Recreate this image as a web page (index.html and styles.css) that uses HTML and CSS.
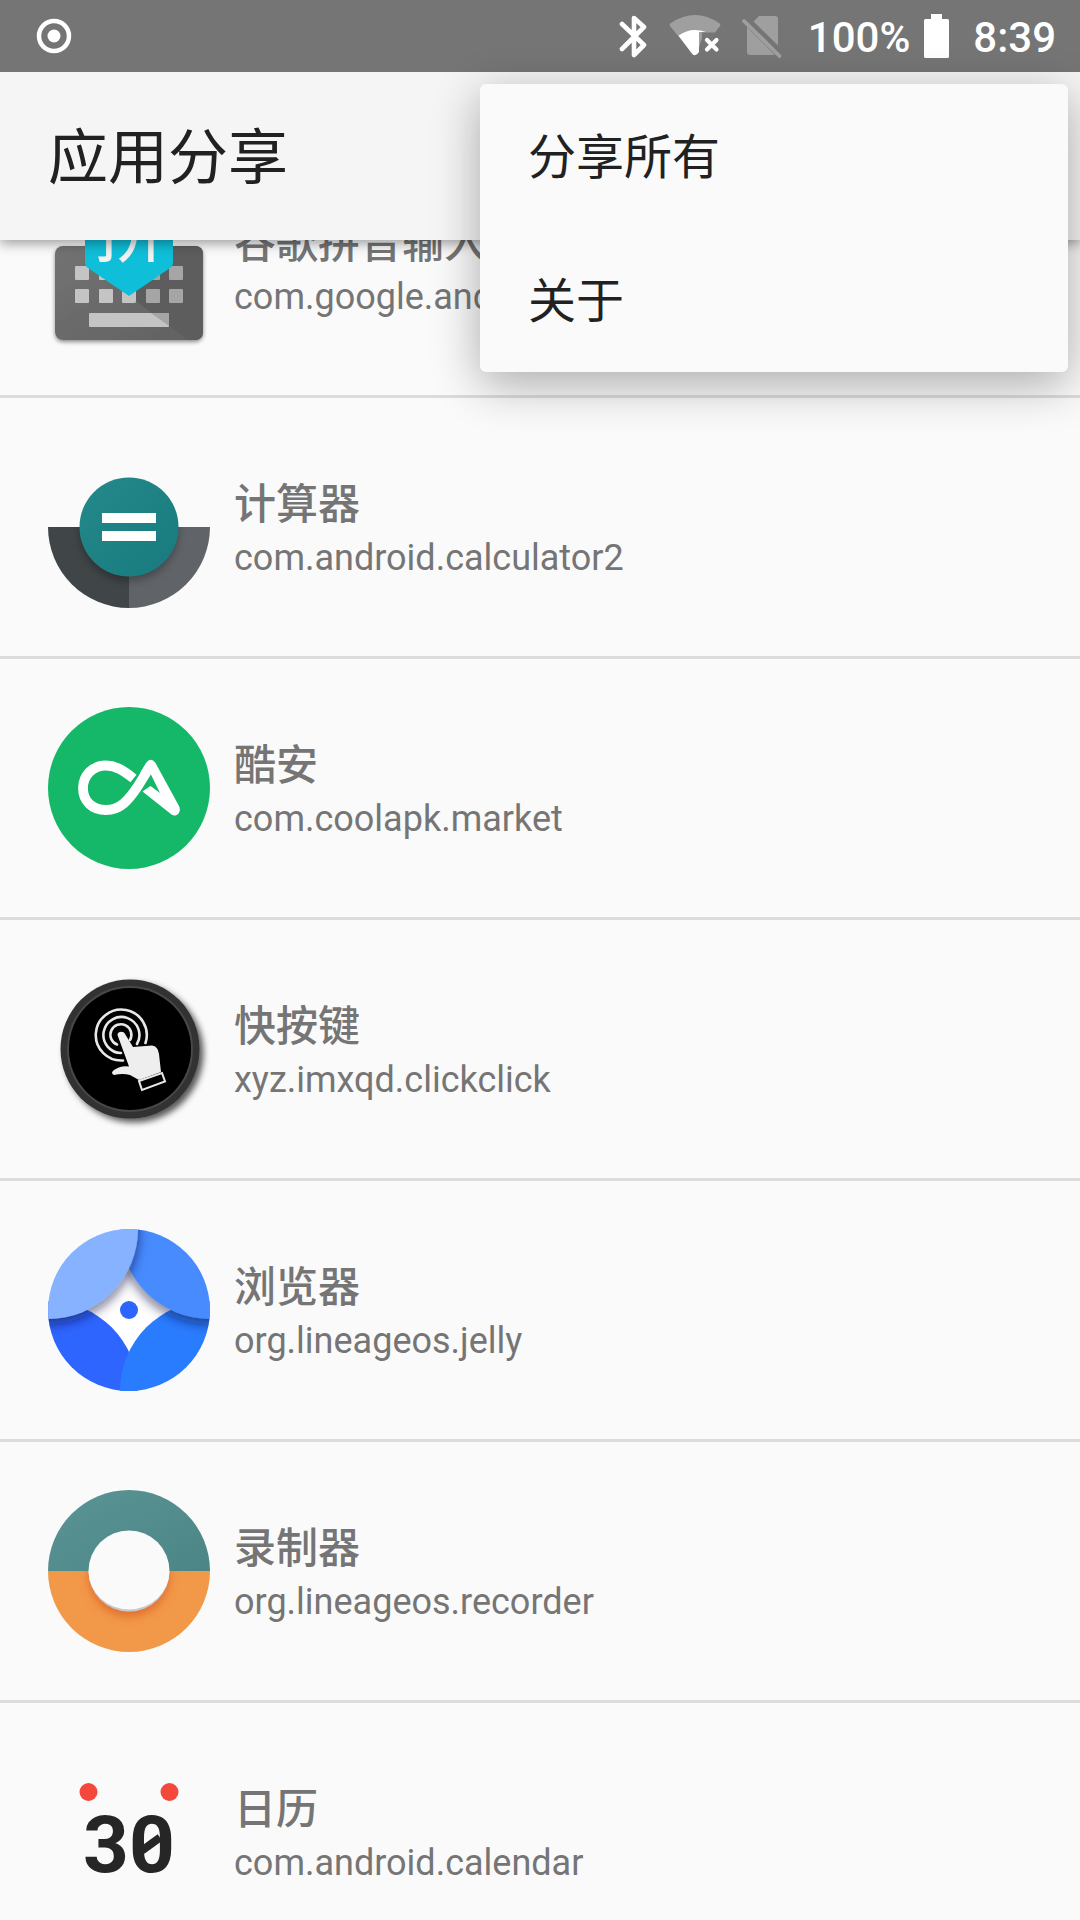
FILE: index.html
```html
<!DOCTYPE html>
<html lang="zh-CN">
<head>
<meta charset="utf-8">
<meta name="viewport" content="width=device-width, initial-scale=1">
<title>应用分享</title>
<link rel="stylesheet" href="styles.css">
</head>
<body>
<div class="screen">
  <div class="status-bar">
    <svg class="status-record" width="36" height="36" viewBox="0 0 36 36" aria-hidden="true">
      <circle cx="18" cy="18" r="15" fill="none" stroke="#fff" stroke-width="4.5"/>
      <circle cx="18" cy="18" r="6.5" fill="#fff"/>
    </svg>
    <div class="status-icons">
      <svg width="30" height="44" viewBox="0 0 30 44" aria-hidden="true">
        <path d="M4 10L26 31L16 41V4L26 13L4 35" fill="none" stroke="#fff" stroke-width="4.6" stroke-linecap="round" stroke-linejoin="round"/>
      </svg>
      <svg width="52" height="44" viewBox="0 0 52 44" aria-hidden="true">
        <path d="M1 12Q0 10 2 9Q26-7 50 9Q52 10 51 12L46 18.500H33V24L28 40Q26 42.500 23.500 40Z" fill="#9f9f9f"/>
        <path d="M9.500 21.500Q22 12.500 37 18H30V38Q26 44 22.500 39Z" fill="#fff"/>
        <path d="M38 26L47.500 35.500M47.500 26L38 35.500" stroke="#fff" stroke-width="4.200" stroke-linecap="round"/>
      </svg>
      <svg width="40" height="44" viewBox="0 0 40 44" aria-hidden="true">
        <path d="M11.500 7.500L17 2H33Q36 2 36 5V31.500ZM5 13L33 41H8Q5 41 5 38Z" fill="#9f9f9f"/>
        <path d="M2 7L37.500 42" stroke="#9f9f9f" stroke-width="3.800" stroke-linecap="round"/>
      </svg>
    </div>
    <span class="status-text">100%</span>
    <svg class="status-battery" width="25" height="44" viewBox="0 0 25 44" aria-hidden="true">
      <path d="M7 0H18V5H23.500Q25 5 25 6.500V42.500Q25 44 23.500 44H1.500Q0 44 0 42.500V6.500Q0 5 1.500 5H7Z" fill="#fff"/>
    </svg>
    <time class="status-text">8:39</time>
  </div>

  <header class="app-bar">
    <h1 class="app-title">应用分享</h1>
  </header>

  <main class="content">
    <ul class="app-list">
      <li class="app-row">
        <svg class="app-icon" viewBox="0 0 162 162" aria-hidden="true">
          <defs>
            <linearGradient id="kbBody" x1="0" y1="0" x2="1" y2="1"><stop offset="0" stop-color="#737373"/><stop offset="1" stop-color="#616161"/></linearGradient>
            <filter id="kbShadow" x="-10%" y="-10%" width="120%" height="130%"><feDropShadow dx="0" dy="2" stdDeviation="2" flood-opacity=".45"/></filter>
          </defs>
          <rect x="7" y="61" width="148" height="94" rx="8" fill="url(#kbBody)" filter="url(#kbShadow)"/>
          <path d="M81 111L125 78V61H147Q155 61 155 69V147Q155 155 147 155H140Z" fill="#5d5d5d"/>
          <g fill="#c4c4c4">
            <rect x="27" y="81" width="14" height="14" rx="1"/><rect x="51" y="81" width="14" height="14" rx="1"/>
            <rect x="27" y="104" width="14" height="14" rx="1"/><rect x="51" y="104" width="14" height="14" rx="1"/><rect x="74" y="104" width="14" height="14" rx="1"/>
            <rect x="41" y="128" width="80" height="14" rx="1"/>
          </g>
          <g fill="#a5a5a5">
            <rect x="98" y="81" width="14" height="14" rx="1"/><rect x="121" y="81" width="14" height="14" rx="1"/>
            <rect x="98" y="104" width="14" height="14" rx="1"/><rect x="121" y="104" width="14" height="14" rx="1"/>
            <path d="M88 116L88 118H86ZM103 128H121V141Z"/>
          </g>
          <path d="M37 8H125V77Q125 81 122 83L81 111L40 83Q37 81 37 77Z" fill="#0fbfd9"/>
          <text x="83" y="71" text-anchor="middle" class="pinyin-glyph">拼</text>
        </svg>
        <div class="app-text"><h2 class="app-name">谷歌拼音输入法</h2><p class="app-package">com.google.android.inputmethod.pinyin</p></div>
      </li>
      <li class="app-row">
        <svg class="app-icon" viewBox="0 0 162 162" aria-hidden="true">
          <defs>
            <linearGradient id="calcDisc" x1="0" y1="0" x2="1" y2="1"><stop offset="0" stop-color="#24898a"/><stop offset="1" stop-color="#187a7e"/></linearGradient>
            <filter id="calcShadow" x="-20%" y="-20%" width="140%" height="150%"><feDropShadow dx="0" dy="5" stdDeviation="4" flood-opacity=".3"/></filter>
            <clipPath id="calcBowl"><path d="M0 81H162A81 81 0 0 1 0 81Z"/></clipPath>
          </defs>
          <path d="M0 81A81 81 0 0 0 81 162V81Z" fill="#404548"/>
          <path d="M162 81A81 81 0 0 1 81 162V81Z" fill="#606469"/>
          <g clip-path="url(#calcBowl)"><circle cx="81" cy="81" r="49" fill="#187a7e" filter="url(#calcShadow)"/></g>
          <circle cx="81" cy="81" r="49.500" fill="url(#calcDisc)"/>
          <path d="M54 67H108V77H54ZM54 85H108V95H54Z" fill="#fff"/>
        </svg>
        <div class="app-text"><h2 class="app-name">计算器</h2><p class="app-package">com.android.calculator2</p></div>
      </li>
      <li class="app-row">
        <svg class="app-icon" viewBox="0 0 162 162" aria-hidden="true">
          <circle cx="81" cy="81" r="81" fill="#15b868"/>
          <path d="M85.500 71.500C76 64 68 58.500 58 58.500C44 58.500 35 69 35 81C35 94 44 103 58 103C72 103 80 94 90 79L102.700 58.500" fill="none" stroke="#fff" stroke-width="9.800" stroke-linejoin="round"/>
          <path d="M98 56Q102.700 49.500 107.500 56L131 99C134 105 128.500 111 123.500 107.500L94.500 84.500L102.500 79L112 86L102.700 67L97 75L92 66Z" fill="#fff"/>
        </svg>
        <div class="app-text"><h2 class="app-name">酷安</h2><p class="app-package">com.coolapk.market</p></div>
      </li>
      <li class="app-row">
        <svg class="app-icon" viewBox="0 0 162 162" aria-hidden="true">
          <defs><filter id="clickShadow" x="-20%" y="-20%" width="150%" height="150%"><feDropShadow dx="4" dy="4" stdDeviation="3" flood-opacity=".65"/></filter></defs>
          <circle cx="82" cy="81" r="69.500" fill="#303030" filter="url(#clickShadow)"/>
          <circle cx="82" cy="81" r="62" fill="none" stroke="#484848" stroke-width="2"/>
          <circle cx="82" cy="81" r="61" fill="#000"/>
          <g fill="none" stroke="#e8e8e8" stroke-width="2.600" stroke-linecap="round">
            <path d="M97.500 75A25.500 25.500 0 1 0 75 92.500"/>
            <path d="M89 76A18 18 0 1 0 73 85"/>
            <path d="M82 72A10.500 10.500 0 1 0 69 76.500"/>
            <path d="M91 113L114 105L117 113.500L94 122Z" stroke-width="2"/>
          </g>
          <path d="M69.500 67C69.500 63 76 63 77 66L85 79L104 77.500Q110 78 111 86L113 104L91 112L82 107Q75 105 66 107Q62 105 66 102Q73 97 81 98.500Z" fill="#eee"/>
        </svg>
        <div class="app-text"><h2 class="app-name">快按键</h2><p class="app-package">xyz.imxqd.clickclick</p></div>
      </li>
      <li class="app-row">
        <svg class="app-icon" viewBox="0 0 162 162" aria-hidden="true">
          <defs>
            <clipPath id="jellyClip"><circle cx="81" cy="81" r="81"/></clipPath>
            <filter id="jellyShadow" x="-20%" y="-20%" width="140%" height="140%"><feDropShadow dx="0" dy="5" stdDeviation="6" flood-color="#101040" flood-opacity=".6"/></filter>
          </defs>
          <g clip-path="url(#jellyClip)">
            <rect width="162" height="162" fill="#fff"/>
            <circle cx="0" cy="162" r="90" fill="#2e65ff"/>
            <circle cx="162" cy="162" r="90" fill="#2a7cff"/>
            <circle cx="162" cy="0" r="90" fill="#478bff" filter="url(#jellyShadow)"/>
            <circle cx="0" cy="0" r="90" fill="#87b2ff" filter="url(#jellyShadow)"/>
            <circle cx="81" cy="81" r="9" fill="#2e65ff"/>
          </g>
        </svg>
        <div class="app-text"><h2 class="app-name">浏览器</h2><p class="app-package">org.lineageos.jelly</p></div>
      </li>
      <li class="app-row">
        <svg class="app-icon" viewBox="0 0 162 162" aria-hidden="true">
          <defs>
            <linearGradient id="recTop" x1="0" y1="0" x2="1" y2="1"><stop offset="0" stop-color="#5b9494"/><stop offset="1" stop-color="#4b8586"/></linearGradient>
            <clipPath id="recLower"><rect y="81" width="162" height="81"/></clipPath>
            <filter id="recShadow" x="-20%" y="-20%" width="140%" height="150%"><feDropShadow dx="0" dy="5" stdDeviation="4" flood-color="#d85f20" flood-opacity=".7"/></filter>
          </defs>
          <path d="M0 81A81 81 0 0 1 162 81Z" fill="url(#recTop)"/>
          <path d="M0 81A81 81 0 0 0 162 81Z" fill="#f29849"/>
          <g clip-path="url(#recLower)"><circle cx="81" cy="81" r="40.500" fill="#c8c8c8" filter="url(#recShadow)"/></g>
          <path d="M40.500 81A40.500 40.500 0 0 1 121.500 81A40.500 38.500 0 0 1 40.500 81Z" fill="#fafafa"/>
        </svg>
        <div class="app-text"><h2 class="app-name">录制器</h2><p class="app-package">org.lineageos.recorder</p></div>
      </li>
      <li class="app-row">
        <svg class="app-icon" viewBox="0 0 162 162" aria-hidden="true">
          <circle cx="40.500" cy="41" r="9" fill="#f4483c"/>
          <circle cx="121.500" cy="41" r="9" fill="#f4483c"/>
          <text x="81" y="121" text-anchor="middle" class="calendar-day">30</text>
          <path d="M94 99.500L112 86.500" stroke="#262626" stroke-width="8"/>
        </svg>
        <div class="app-text"><h2 class="app-name">日历</h2><p class="app-package">com.android.calendar</p></div>
      </li>
    </ul>
  </main>

  <div class="overflow-menu" role="menu">
    <button class="menu-item" type="button" role="menuitem">分享所有</button>
    <button class="menu-item" type="button" role="menuitem">关于</button>
  </div>
</div>
</body>
</html>
```
FILE: styles.css
```css
* {
  box-sizing: border-box;
}

body {
  margin: 0;
  background: #fafafa;
  color: #212121;
  font-family: Roboto, "Noto Sans CJK SC", sans-serif;
}

.screen {
  position: relative;
  display: flex;
  flex-direction: column;
  height: 100vh;
  overflow: hidden;
}

.status-bar {
  display: flex;
  flex: none;
  align-items: center;
  height: 72px;
  padding: 0 24px 0 36px;
  background: #757575;
  color: #fff;
  font-size: 42px;
  font-weight: 500;
  line-height: 48px;
  z-index: 2;
}

.status-record {
  margin-right: auto;
}

.status-icons {
  display: flex;
  gap: 21px;
  margin-right: 26px;
}

.status-text {
  padding-top: 4px;
}

.status-battery {
  margin: 0 24px 0 14px;
}

.app-bar {
  display: flex;
  flex: none;
  align-items: center;
  height: 168px;
  padding: 6px 48px 0;
  background: #f5f5f5;
  box-shadow: 0 3px 12px rgba(0, 0, 0, 0.4);
  z-index: 1;
}

.app-title {
  margin: 0;
  font-size: 60px;
  font-weight: 400;
  line-height: 72px;
}

.content {
  flex: 1;
  min-height: 0;
}

/* The list is scrolled part of the way through its first row. */
.app-list {
  margin: -103px 0 0;
  padding: 0;
  list-style: none;
}

.app-row {
  display: flex;
  align-items: center;
  gap: 24px;
  padding: 48px;
  border-bottom: 3px solid #dcdcdc;
}

.app-icon {
  flex: none;
  width: 162px;
  height: 162px;
}

.app-text {
  min-width: 0;
  padding-top: 6px;
  color: #757575;
}

.app-name {
  margin: 0;
  font-size: 42px;
  font-weight: 500;
  line-height: 56px;
}

.app-package {
  margin: 0;
  font-size: 36px;
  line-height: 50px;
  white-space: nowrap;
}

.pinyin-glyph {
  fill: #f2f2f2;
  font-size: 74px;
  font-weight: 400;
}

.calendar-day {
  fill: #262626;
  font-size: 80px;
  font-weight: 700;
}

.overflow-menu {
  position: absolute;
  top: 84px;
  right: 12px;
  display: flex;
  flex-direction: column;
  width: 588px;
  border-radius: 6px;
  background: #fafafa;
  box-shadow: 0 12px 48px rgba(0, 0, 0, 0.32);
  z-index: 3;
}

.menu-item {
  height: 144px;
  padding: 4px 48px 0;
  border: 0;
  background: none;
  color: #212121;
  font-family: inherit;
  font-size: 48px;
  line-height: 56px;
  text-align: left;
}
```
